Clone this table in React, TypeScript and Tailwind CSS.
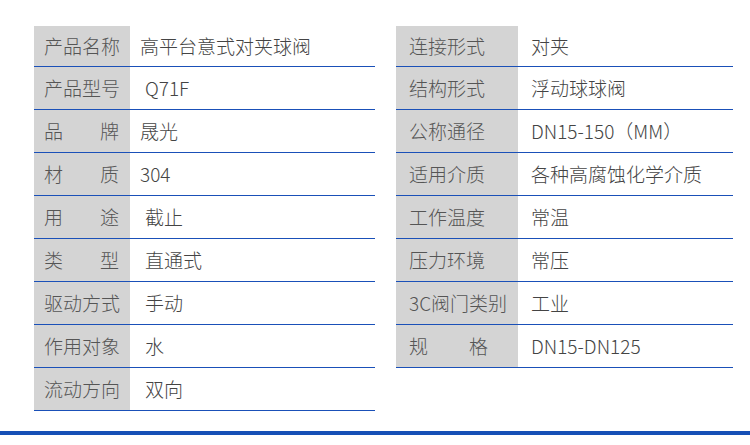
import React from 'react';

interface SpecRow {
  label: string;
  value: string;
  spread?: boolean;
  indent?: boolean;
}

const leftRows: SpecRow[] = [
  { label: '产品名称', value: '高平台意式对夹球阀' },
  { label: '产品型号', value: 'Q71F', indent: true },
  { label: '品牌', value: '晟光', spread: true },
  { label: '材质', value: '304', spread: true },
  { label: '用途', value: '截止', spread: true, indent: true },
  { label: '类型', value: '直通式', spread: true, indent: true },
  { label: '驱动方式', value: '手动', indent: true },
  { label: '作用对象', value: '水', indent: true },
  { label: '流动方向', value: '双向', indent: true },
];

const rightRows: SpecRow[] = [
  { label: '连接形式', value: '对夹' },
  { label: '结构形式', value: '浮动球球阀' },
  { label: '公称通径', value: 'DN15-150（MM）' },
  { label: '适用介质', value: '各种高腐蚀化学介质' },
  { label: '工作温度', value: '常温' },
  { label: '压力环境', value: '常压' },
  { label: '3C阀门类别', value: '工业' },
  { label: '规格', value: 'DN15-DN125', spread: true },
];

const SpecTable: React.FC<{ rows: SpecRow[]; side: 'left' | 'right' }> = ({ rows, side }) => {
  const isLeft = side === 'left';
  return (
    <div className={isLeft ? 'w-[341px]' : 'w-[337px]'}>
      {rows.map((row, i) => (
        <div
          key={row.label}
          className={`flex border-b border-[#1a50b8] ${i === 0 ? 'h-[41px]' : 'h-[43px]'}`}
        >
          <div
            className={`h-full shrink-0 bg-[#d4d4d4] flex items-center pb-[2px] text-[#555] ${
              isLeft ? 'w-[96px] pl-[10px]' : 'w-[122px] pl-[13px]'
            }`}
          >
            {row.spread ? (
              <div className={`flex justify-between ${isLeft ? 'w-[75px]' : 'w-[79px]'}`}>
                <span>{row.label[0]}</span>
                <span>{row.label[1]}</span>
              </div>
            ) : (
              <span className="whitespace-nowrap">{row.label}</span>
            )}
          </div>
          <div
            className={`flex items-center pb-[2px] text-[#444] whitespace-nowrap ${
              isLeft ? (row.indent ? 'pl-[15px]' : 'pl-[10px]') : 'pl-[13px]'
            }`}
          >
            {row.value}
          </div>
        </div>
      ))}
    </div>
  );
};

export default function App() {
  return (
    <div
      className="w-[750px] h-[445px] bg-white flex flex-col text-[19px] font-light leading-none"
      style={{ fontFamily: '"Noto Sans CJK SC", "Noto Sans", sans-serif' }}
    >
      <div className="flex items-start gap-[21px] pl-[34px] pt-[26px]">
        <SpecTable rows={leftRows} side="left" />
        <SpecTable rows={rightRows} side="right" />
      </div>
      <div className="mt-[20px] h-[4px] w-full bg-[#1650b6]" />
    </div>
  );
}
